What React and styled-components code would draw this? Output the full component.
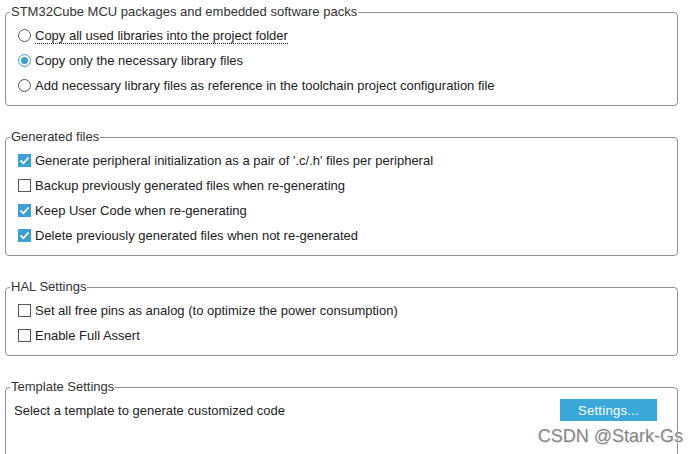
import React from 'react'
import styled, { createGlobalStyle } from 'styled-components'

const GlobalStyle = createGlobalStyle`
  html, body {
    margin: 0;
    padding: 0;
    background: #fff;
    overflow: hidden;
  }
  body {
    font-family: "Liberation Sans", Arial, sans-serif;
    font-size: 13px;
    color: #222;
  }
`

const Page = styled.div`
  position: relative;
  width: 699px;
  height: 454px;
  padding: 5px 0 0 5px;
  box-sizing: border-box;
  overflow: hidden;
`

const Group = styled.fieldset`
  width: 673px;
  box-sizing: border-box;
  margin: 0 0 24px 0;
  padding: 4px 0 7px 0;
  border: 1px solid #8c9094;
  border-radius: 4px;
  min-height: ${p => p.$minHeight || 'auto'};
`

const Legend = styled.legend`
  margin-left: 4px;
  padding: 0 1px;
  line-height: 14px;
  font-size: 13px;
  color: #333;
`

const Row = styled.label`
  display: flex;
  align-items: center;
  height: 25px;
  padding-left: 12px;
  gap: 4px;
`

const Text = styled.span`
  line-height: 14px;
  border-bottom: 1px dotted ${p => (p.$focused ? '#222' : 'transparent')};
  margin-top: 1px;
`

const Box = styled.span`
  width: 13px;
  height: 13px;
  box-sizing: border-box;
  display: inline-flex;
  align-items: center;
  justify-content: center;
  border: 1px solid ${p => (p.$checked ? '#3b9fd8' : '#555')};
  background: ${p => (p.$checked ? '#3b9fd8' : '#fff')};
  flex: none;
`

const Radio = styled.span`
  width: 13px;
  height: 13px;
  box-sizing: border-box;
  border-radius: 50%;
  border: 1px solid ${p => (p.$checked ? '#3b9fd8' : '#555')};
  display: inline-flex;
  align-items: center;
  justify-content: center;
  flex: none;

  &::after {
    content: '';
    width: 7px;
    height: 7px;
    border-radius: 50%;
    background: ${p => (p.$checked ? '#3b9fd8' : 'transparent')};
  }
`

const TemplateRow = styled.div`
  display: flex;
  align-items: center;
  justify-content: space-between;
  height: 24px;
  padding: 0 20px 0 8px;
`

const Button = styled.button`
  width: 97px;
  height: 22px;
  border: none;
  background: #3aa8db;
  color: #fff;
  font-family: "Liberation Sans", Arial, sans-serif;
  font-size: 13px;
  letter-spacing: 0.3px;
  padding: 0;
`

const Watermark = styled.div`
  position: absolute;
  right: 16px;
  bottom: 7px;
  font-family: "Liberation Sans", Arial, sans-serif;
  font-size: 18px;
  color: #858585;
  text-shadow: 0 0 2px #fff, 1px 1px 1px #ddd;
`

const Check = () => (
  <svg width="11" height="11" viewBox="0 0 11 11">
    <path d="M1.5 5.5 L4.3 8.3 L9.5 2.5" fill="none" stroke="#fff" strokeWidth="1.8" />
  </svg>
)

const CheckRow = ({ checked, children }) => (
  <Row>
    <Box $checked={checked}>{checked && <Check />}</Box>
    <Text>{children}</Text>
  </Row>
)

const RadioRow = ({ checked, focused, children }) => (
  <Row>
    <Radio $checked={checked} />
    <Text $focused={focused}>{children}</Text>
  </Row>
)

export default function App() {
  return (
    <>
      <GlobalStyle />
      <Page>
        <Group>
          <Legend>STM32Cube MCU packages and embedded software packs</Legend>
          <RadioRow focused>Copy all used libraries into the project folder</RadioRow>
          <RadioRow checked>Copy only the necessary library files</RadioRow>
          <RadioRow>Add necessary library files as reference in the toolchain project configuration file</RadioRow>
        </Group>

        <Group>
          <Legend>Generated files</Legend>
          <CheckRow checked>Generate peripheral initialization as a pair of '.c/.h' files per peripheral</CheckRow>
          <CheckRow>Backup previously generated files when re-generating</CheckRow>
          <CheckRow checked>Keep User Code when re-generating</CheckRow>
          <CheckRow checked>Delete previously generated files when not re-generated</CheckRow>
        </Group>

        <Group>
          <Legend>HAL Settings</Legend>
          <CheckRow>Set all free pins as analog (to optimize the power consumption)</CheckRow>
          <CheckRow>Enable Full Assert</CheckRow>
        </Group>

        <Group $minHeight="100px">
          <Legend>Template Settings</Legend>
          <TemplateRow>
            <span>Select a template to generate customized code</span>
            <Button>Settings...</Button>
          </TemplateRow>
        </Group>

        <Watermark>CSDN @Stark-Gs</Watermark>
      </Page>
    </>
  )
}
